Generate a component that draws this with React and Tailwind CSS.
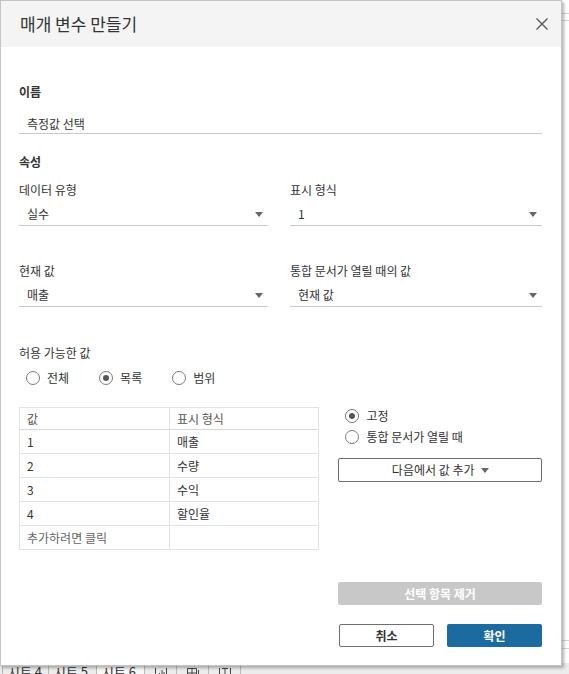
import { useState } from "react";

const FONT = "font-['Noto_Sans_CJK_KR','Noto_Sans',sans-serif]";

const LIST_ROWS = [
  { value: "1", label: "매출" },
  { value: "2", label: "수량" },
  { value: "3", label: "수익" },
  { value: "4", label: "할인율" },
];

function Caret({ className = "" }) {
  return (
    <svg width="8" height="5" viewBox="0 0 8 5" className={className}>
      <path d="M0 0h8L4 5z" fill="#666" />
    </svg>
  );
}

function Radio({ checked, label, onClick }) {
  return (
    <button type="button" onClick={onClick} className="flex items-center gap-[7px] text-[12px] leading-[18px] text-[#333]">
      <span className="flex h-[14px] w-[14px] items-center justify-center rounded-full border border-[#7a7a7a] bg-white">
        {checked && <span className="h-[6px] w-[6px] rounded-full bg-[#555]" />}
      </span>
      {label}
    </button>
  );
}

function Select({ value }) {
  return (
    <div className="mt-[4px] flex h-[23px] items-center justify-between border-b border-[#c8c8c8] pl-[8px] pr-[5px] text-[12px] text-[#333]">
      <span>{value}</span>
      <Caret />
    </div>
  );
}

function SheetTabs() {
  return (
    <div className="flex h-[11px] items-start bg-[#ececec] pl-[2px] text-[13px] leading-[18px] text-[#333]">
      <div className="w-[47px] shrink-0 border-x border-[#b8b8b8] pl-[5px]">시트 4</div>
      <div className="w-[48px] shrink-0 border-r border-[#b8b8b8] pl-[5px]">시트 5</div>
      <div className="w-[48px] shrink-0 border-r border-[#b8b8b8] bg-[#f8f8f8] pl-[5px]">시트 6</div>
      {/* new sheet / dashboard / story icons, mostly hidden below the fold */}
      <div className="flex h-[18px] w-[32px] shrink-0 justify-center border-r border-[#b8b8b8] pt-[4px]">
        <svg width="14" height="12" viewBox="0 0 14 12" fill="none" stroke="#444" strokeWidth="1">
          <path d="M1.5 1v10M12.5 1v10M5.5 6v5M8 3v8M10 5v6" />
        </svg>
      </div>
      <div className="flex h-[18px] w-[32px] shrink-0 justify-center border-r border-[#b8b8b8] pt-[4px]">
        <svg width="14" height="12" viewBox="0 0 14 12" fill="none" stroke="#444" strokeWidth="1">
          <path d="M1.5 1.5h9v9h-9zM6 1.5v9M1.5 6h9M12.5 3v5" />
        </svg>
      </div>
      <div className="flex h-[18px] w-[32px] shrink-0 justify-center border-r border-[#b8b8b8] pt-[4px]">
        <svg width="14" height="12" viewBox="0 0 14 12" fill="none" stroke="#444" strokeWidth="1">
          <path d="M1.5 1v10M12.5 1v10M4 1.5h6M7 1.5v9" />
        </svg>
      </div>
    </div>
  );
}

export default function App() {
  const [allowed, setAllowed] = useState("list");
  const [openValue, setOpenValue] = useState("fixed");

  return (
    <div className={`relative h-[674px] w-[569px] overflow-hidden bg-white ${FONT}`}>
      {/* workbook behind the dialog */}
      <div className="flex h-full flex-col">
        <div className="h-[13px]" />
        <div className="h-px bg-[#d4d4d4]" />
        <div className="h-[6px]" />
        <div className="h-px bg-[#d4d4d4]" />
        <div className="flex-1" />
        <div className="h-px bg-[#d4d4d4]" />
        <div className="h-[7px]" />
        <div className="h-px bg-[#d4d4d4]" />
        <div className="h-[14px]" />
        <SheetTabs />
      </div>

      {/* dialog */}
      <div className="absolute left-0 top-0 flex h-[666px] w-[562px] flex-col border border-[#c4c4c4] bg-white shadow-[2px_2px_3px_rgba(0,0,0,0.3)]">
        <div className="flex h-[46px] items-center justify-between bg-[#f4f4f4] pl-[19px] pr-[12px]">
          <h1 className="text-[17px] font-normal leading-[22px] text-[#333]">매개 변수 만들기</h1>
          <button type="button" aria-label="닫기" className="flex h-[14px] w-[14px] items-center justify-center">
            <svg width="12" height="12" viewBox="0 0 12 12" fill="none" stroke="#555" strokeWidth="1.3">
              <path d="M0.5 0.5l11 11M11.5 0.5l-11 11" />
            </svg>
          </button>
        </div>

        <div className="flex flex-col pl-[18px] pr-[19px] text-[12px] text-[#333]">
          <div className="mt-[36px] h-[18px] font-bold leading-[18px]">이름</div>
          <div className="mt-[11px] flex h-[22px] items-center border-b border-[#c8c8c8] pl-[8px] pt-[3px]">측정값 선택</div>

          <div className="mt-[19px] h-[18px] font-bold leading-[18px]">속성</div>

          <div className="grid grid-cols-[249px_252px] gap-x-[22px]">
            <div className="mt-[10px]">
              <div className="h-[18px] leading-[18px]">데이터 유형</div>
              <Select value="실수" />
            </div>
            <div className="mt-[10px]">
              <div className="h-[18px] leading-[18px]">표시 형식</div>
              <Select value="1" />
            </div>
            <div className="mt-[36px]">
              <div className="h-[18px] leading-[18px]">현재 값</div>
              <Select value="매출" />
            </div>
            <div className="mt-[36px]">
              <div className="h-[18px] leading-[18px]">통합 문서가 열릴 때의 값</div>
              <Select value="현재 값" />
            </div>
          </div>

          <div className="mt-[37px] h-[18px] leading-[18px]">허용 가능한 값</div>
          <div className="ml-[7px] mt-[7px] flex h-[18px] items-center gap-[30px]">
            <Radio label="전체" checked={allowed === "all"} onClick={() => setAllowed("all")} />
            <Radio label="목록" checked={allowed === "list"} onClick={() => setAllowed("list")} />
            <Radio label="범위" checked={allowed === "range"} onClick={() => setAllowed("range")} />
          </div>

          <div className="mt-[20px] flex gap-[19px]">
            <div className="w-[301px] border border-[#e2e2e2] leading-[18px]">
              <div className="grid h-[22px] grid-cols-[150px_1fr] border-b border-[#d6d6d6] text-[#555]">
                <div className="flex items-center border-r border-[#e2e2e2] pl-[7px]">값</div>
                <div className="flex items-center pl-[7px]">표시 형식</div>
              </div>
              {LIST_ROWS.map((row) => (
                <div key={row.value} className="grid h-[24px] grid-cols-[150px_1fr] border-b border-[#e2e2e2]">
                  <div className="flex items-center border-r border-[#e2e2e2] pl-[7px]">{row.value}</div>
                  <div className="flex items-center pl-[7px]">{row.label}</div>
                </div>
              ))}
              <div className="grid h-[23px] grid-cols-[150px_1fr]">
                <div className="flex items-center border-r border-[#e2e2e2] pl-[7px] text-[#666]">추가하려면 클릭</div>
                <div />
              </div>
            </div>

            <div className="flex w-[204px] flex-col">
              <div className="ml-[7px] flex h-[17px] items-center">
                <Radio label="고정" checked={openValue === "fixed"} onClick={() => setOpenValue("fixed")} />
              </div>
              <div className="ml-[7px] mt-[4px] flex h-[18px] items-center">
                <Radio label="통합 문서가 열릴 때" checked={openValue === "open"} onClick={() => setOpenValue("open")} />
              </div>
              <button
                type="button"
                className="mt-[12px] flex h-[24px] items-center justify-center gap-[6px] rounded-[2px] border border-[#6e6e6e] bg-white text-[12px] text-[#333]"
              >
                다음에서 값 추가
                <Caret />
              </button>
            </div>
          </div>

          <div className="flex flex-col items-end">
            <button
              type="button"
              disabled
              className="mt-[32px] h-[23px] w-[204px] rounded-[2px] bg-[#c8c8c8] text-[12px] font-bold text-white"
            >
              선택 항목 제거
            </button>
            <div className="mt-[19px] flex gap-[13px]">
              <button type="button" className="h-[23px] w-[95px] rounded-[2px] border border-[#6e6e6e] bg-white text-[12px] font-bold text-[#333]">
                취소
              </button>
              <button type="button" className="h-[23px] w-[95px] rounded-[2px] bg-[#1b6ba1] text-[12px] font-bold text-white">
                확인
              </button>
            </div>
          </div>
        </div>
      </div>
    </div>
  );
}
